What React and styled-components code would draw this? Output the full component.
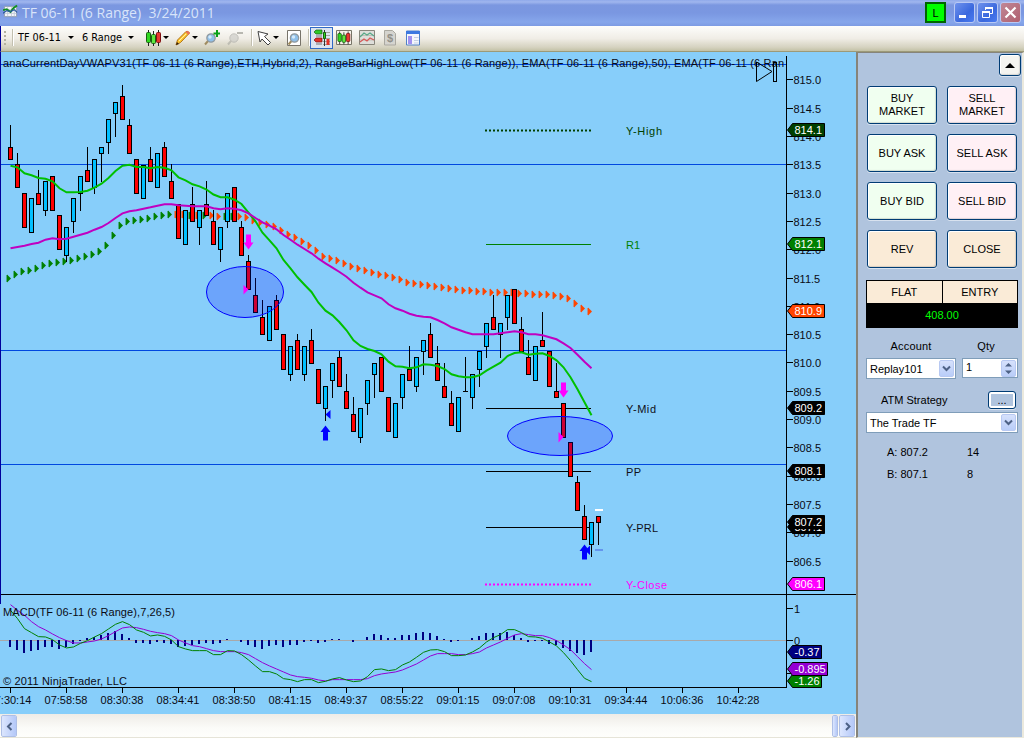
import React from 'react'
import styled, { createGlobalStyle } from 'styled-components'

const GlobalStyle = createGlobalStyle`
* {
  box-sizing: border-box;
}
body {
  margin: 0;
  background: #87cefa;
  font-family: "Liberation Sans", Arial, sans-serif;
  font-size: 11px;
  color: #000;
  overflow: hidden;
}
`

/* ---------- chart data ---------- */

// high, low, body top, body bottom, direction
const candles = [
  [125, 160, 147, 160, 'd'], [153, 188, 164, 188, 'd'], [193, 228, 193, 228, 'd'], [198, 233, 198, 233, 'u'],
  [170, 205, 193, 205, 'd'], [181, 216, 181, 211, 'u'], [176, 211, 176, 211, 'd'], [215, 250, 215, 250, 'd'],
  [227, 262, 227, 256, 'u'], [198, 233, 198, 222, 'u'], [176, 211, 176, 194, 'u'], [147, 182, 170, 182, 'd'],
  [159, 194, 159, 188, 'u'], [147, 182, 147, 154, 'u'], [119, 154, 119, 143, 'u'], [102, 137, 102, 114, 'u'],
  [85, 120, 96, 120, 'd'], [119, 154, 125, 154, 'd'], [159, 194, 159, 194, 'd'], [165, 199, 165, 199, 'u'],
  [147, 182, 159, 182, 'd'], [153, 188, 153, 188, 'u'], [142, 177, 147, 177, 'd'], [164, 199, 181, 199, 'd'],
  [204, 239, 204, 239, 'd'], [210, 245, 210, 245, 'u'], [187, 222, 204, 222, 'd'], [210, 245, 210, 228, 'u'],
  [181, 216, 204, 216, 'd'], [210, 245, 221, 245, 'd'], [227, 262, 227, 250, 'u'], [193, 228, 193, 222, 'u'],
  [187, 222, 187, 222, 'd'], [221, 256, 227, 256, 'd'], [255, 290, 261, 290, 'd'], [278, 313, 295, 313, 'd'],
  [300, 335, 317, 335, 'd'], [306, 341, 306, 341, 'u'], [295, 330, 300, 330, 'd'], [334, 370, 334, 370, 'd'],
  [346, 381, 346, 375, 'u'], [334, 370, 340, 370, 'd'], [346, 381, 346, 375, 'u'], [329, 364, 340, 364, 'd'],
  [369, 404, 369, 404, 'd'], [386, 421, 386, 409, 'u'], [363, 398, 363, 381, 'u'], [351, 387, 357, 387, 'd'],
  [374, 409, 391, 409, 'd'], [397, 432, 414, 432, 'd'], [408, 443, 408, 438, 'u'], [380, 415, 380, 404, 'u'],
  [363, 398, 363, 375, 'u'], [357, 392, 357, 392, 'd'], [397, 432, 397, 432, 'd'], [403, 438, 403, 438, 'u'],
  [374, 409, 374, 398, 'u'], [346, 381, 369, 381, 'd'], [357, 392, 357, 387, 'u'], [340, 375, 340, 352, 'u'],
  [323, 358, 334, 358, 'd'], [346, 381, 363, 381, 'd'], [363, 398, 386, 398, 'd'], [391, 426, 403, 426, 'd'],
  [397, 432, 397, 432, 'u'], [357, 392, 391, 392, 'u'], [374, 409, 374, 398, 'u'], [351, 387, 351, 370, 'u'],
  [323, 358, 323, 347, 'u'], [295, 330, 317, 330, 'd'], [323, 358, 323, 335, 'u'], [295, 330, 295, 318, 'u'],
  [289, 324, 289, 324, 'd'], [317, 352, 329, 352, 'd'], [340, 375, 357, 375, 'd'], [346, 381, 346, 381, 'u'],
  [312, 347, 340, 347, 'd'], [351, 387, 351, 387, 'd'], [363, 398, 391, 398, 'd'], [403, 438, 403, 438, 'd'],
  [442, 477, 442, 477, 'd'], [476, 511, 482, 511, 'd'], [505, 540, 516, 540, 'd'], [522, 557, 522, 545, 'u'],
  [516, 545, 516, 523, 'd'],
]

const emaFast = [
  165.7, 167.3, 173.3, 175.3, 178, 178.7, 181.3, 188.3, 192.3, 192.3, 192, 190.7, 187.7, 183.7, 178, 171, 165.7,
  164.7, 167, 167, 168.3, 167, 167.7, 170.3, 177.3, 180.3, 184.3, 186.4, 189.5, 194.5, 197.3, 197.3, 199.7, 204,
  212.7, 221.3, 232.7, 240.3, 248.3, 260, 268.3, 277.3, 284.7, 292, 302.7, 310.7, 315.3, 322.3, 330.3, 340.3, 346,
  349, 351, 354.3, 361.7, 366.3, 366.7, 368.3, 367.3, 364.3, 364.7, 366, 369, 374.3, 376.3, 377.3, 377.3, 375.3,
  370.7, 366.7, 362.7, 356, 353, 352.3, 354.7, 353.7, 353.3, 356, 360.3, 367.3, 377.3, 389.3, 402.3, 415.3,
]

const emaSlow = [
  248.3, 247, 245.7, 244, 242.7, 239.7, 238.3, 239.3, 238.7, 236.7, 234.7, 232.7, 229.7, 227, 223, 218, 213.3, 211.3,
  210.3, 208.7, 207.3, 205.7, 204.3, 204.3, 205.3, 205.7, 206.3, 206.3, 206.3, 208.3, 209.3, 208.3, 208.7, 210.3,
  213.3, 218, 222.3, 225.7, 229.3, 235, 239.7, 244.7, 249, 253.3, 258.7, 263.3, 267.7, 272, 276.7, 282.7, 287.7,
  292.3, 295.3, 298.3, 304.3, 308.3, 310.7, 313.7, 315.7, 316.7, 317.3, 320, 323.3, 327.3, 329.7, 332.3, 334.3,
  334.3, 334.3, 334.3, 333.3, 332.3, 331.3, 332.3, 334.3, 334.3, 335.3, 337.3, 339.3, 343.3, 348, 354.7, 361.7, 368.3,
]

const vwap = [
  278, 274, 271, 270, 268, 265, 263, 262, 261, 260, 258, 256, 254, 251, 245, 235, 225, 221, 220, 219, 218, 216, 215,
  214, 214, 214, 215, 215, 215, 215, 216, 216, 216, 216, 217, 220, 222, 224, 226, 230, 234, 237, 241, 245, 250, 256,
  258, 260, 263, 266, 268, 270, 272, 274, 275, 277, 279, 282, 283, 284, 285, 286, 287, 288, 289, 290, 290, 291, 291,
  292, 292, 292, 292, 293, 293, 294, 294, 294, 295, 296, 298, 303, 308, 311,
]
const isRising = i => i < 24 || [26, 28, 31, 32].includes(i)

// lower panel series, in thirds of a pixel below the panel's top
const macd = [
  45, 70, 100, 112, 124, 125, 133, 149, 158, 155, 144, 136, 125, 115, 101, 87, 79, 88, 104, 111, 122, 119, 123, 134,
  154, 161, 166, 166, 166, 178, 178, 166, 167, 178, 194, 212, 229, 229, 236, 250, 253, 259, 253, 253, 262, 258, 251,
  247, 254, 259, 257, 244, 223, 221, 226, 223, 209, 200, 186, 171, 164, 163, 169, 181, 181, 179, 170, 158, 140, 127,
  118, 103, 103, 112, 124, 125, 129, 140, 152, 172, 196, 223, 249, 259,
]
const signal = [
  28, 45, 60, 79, 94, 104, 116, 127, 136, 143, 143, 140, 137, 131, 121, 109, 98, 95, 97, 102, 108, 112, 115, 121, 134,
  143, 151, 154, 160, 166, 169, 169, 169, 172, 178, 190, 202, 212, 221, 230, 239, 244, 246, 249, 254, 257, 253, 253,
  253, 253, 253, 250, 241, 236, 233, 230, 224, 215, 206, 194, 182, 175, 175, 175, 178, 178, 175, 170, 158, 149, 140,
  129, 119, 115, 118, 121, 121, 127, 136, 149, 163, 184, 205, 223,
]
// histogram heights in pixels, positive goes down
const histogram = [
  7, 10, 13, 11, 10, 7, 7, 9, 7, 4, 1, -2, -3, -5, -7, -9, -6, -2, 3, 3, 4, 2, 3, 4, 7, 6, 5, 4, 3, 4, 3, -1, 0, 2, 5,
  7, 9, 6, 5, 7, 5, 5, 2, 1, 3, 2, -1, -1, 0, 2, 0, -3, -6, -5, -2, -2, -5, -5, -7, -8, -7, -4, -1, 2, 1, 0, -2, -4,
  -7, -7, -7, -8, -5, -2, 2, 1, 1, 4, 5, 8, 11, 13, 15, 12,
]

const barX = i => 10.5 + 7 * i
const toPoints = (values, y = v => v) => values.map((v, i) => `${barX(i)},${y(v)}`).join(' ')
const lowerY = v => 595.3 + v / 3

const pivots = [
  { label: 'Y-High', y: 130.5, color: '#004000', text: '#004000', dotted: true, width: 36 },
  { label: 'R1', y: 244.5, color: '#008000', text: '#008000', width: 14 },
  { label: 'Y-Mid', y: 408.5, color: '#000', text: '#101018', width: 30 },
  { label: 'PP', y: 471.5, color: '#000', text: '#101018', width: 15 },
  { label: 'Y-PRL', y: 527.5, color: '#000', text: '#101018', width: 32 },
  { label: 'Y-Close', y: 584.5, color: '#ff00ff', text: '#ff00ff', dotted: true, width: 41 },
]

const priceTags = [
  { label: '814.1', y: 130, color: '#004000' },
  { label: '812.1', y: 244, color: '#008000' },
  { label: '810.9', y: 311, color: '#ff4500' },
  { label: '809.2', y: 408, color: '#000' },
  { label: '808.1', y: 471, color: '#000' },
  { label: '807.1', y: 527, color: '#000' },
  { label: '807.2', y: 522, color: '#000' },
  { label: '806.1', y: 584, color: '#ff00ff' },
  { label: '-0.37', y: 652, color: '#000080', width: 34 },
  { label: '-1.26', y: 681, color: '#008000', width: 34 },
  { label: '-0.895', y: 669, color: '#9400d3', width: 40 },
]

const prices = Array.from({ length: 18 }, (_, i) => 815 - i / 2)
const times = [
  '07:30:14', '07:58:58', '08:30:38', '08:34:41', '08:38:50', '08:41:15', '08:49:37',
  '08:55:22', '09:01:15', '09:07:08', '09:10:31', '09:34:44', '10:06:36', '10:42:28',
]

/* ---------- window frame ---------- */

const Window = styled.div`
width: 1024px;
height: 738px;
display: flex;
flex-direction: column;
overflow: hidden;
`

const TitleBar = styled.header`
height: 26px;
flex: none;
display: flex;
align-items: flex-start;
padding: 2px 3px 0 3px;
background: linear-gradient(#8fa9ea 0, #a0b6ee 2px, #7b97e0 5px, #7a97e1 13px, #86a6eb 22px, #7d9be3 26px);
`

const AppIcon = styled.svg`
width: 15px;
height: 15px;
margin-top: 2px;
`

const Title = styled.h1`
margin: 0 auto 0 4px;
font: 500 14px/22px "Open Sans", "Noto Sans", sans-serif;
white-space: pre;
color: #d8e4fa;
`

const LinkBox = styled.span`
width: 21px;
height: 21px;
border: 2px solid #006400;
background: #00ff00;
text-align: center;
line-height: 18px;
margin-right: 8px;
`

const WindowButton = styled.button`
width: 21px;
height: 21px;
padding: 0;
margin-left: ${props => (props.$first ? 0 : 2)}px;
display: block;
border: 1px solid #b9c9f4;
border-radius: 3px;
background: ${props => (props.$close ? 'linear-gradient(135deg, #c08796, #b0606f)' : 'linear-gradient(135deg, #6f92ec, #3a68de 60%, #4a7bf0)')};
`

const ToolBar = styled.nav`
height: 26px;
flex: none;
display: flex;
align-items: center;
padding: 0 0 2px 3px;
border-left: 1px solid #00009c;
border-bottom: 1px solid #9c9a78;
background: linear-gradient(#fdfdfb, #f0ede6 50%, #d5d2c0 85%, #c3c1a6);
`

const ToolText = styled.span`
font: 10.8px "DejaVu Sans Condensed", "DejaVu Sans", sans-serif;
font-stretch: condensed;
width: ${props => props.$width}px;
margin-left: ${props => props.$gap}px;
white-space: nowrap;
`

const Caret = styled.span`
border: 3px solid transparent;
border-top-color: #000;
border-bottom: 0;
margin-left: ${props => props.$gap}px;
`

const Separator = styled.span`
width: 1px;
height: 17px;
background: #c2bfb0;
border-right: 1px solid #fff;
box-sizing: content-box;
margin-left: ${props => props.$gap}px;
`

const ToolIcon = styled.svg`
width: 16px;
height: 16px;
flex: none;
margin-left: ${props => props.$gap}px;
`

const ActiveTool = styled.span`
width: 23px;
height: 22px;
flex: none;
display: flex;
align-items: center;
justify-content: center;
border: 1px solid #316ac5;
background: #dce4f0;
`

const Main = styled.main`
flex: 1;
min-height: 0;
display: flex;
`

const ChartColumn = styled.section`
width: 856px;
display: flex;
flex-direction: column;
background: #87cefa;
`

const Chart = styled.svg`
display: block;
width: 856px;
height: 662px;
flex: none;
font: 11px "Liberation Sans", Arial, sans-serif;
`

const ScrollBar = styled.div`
height: 24px;
display: flex;
align-items: flex-start;
justify-content: space-between;
padding: 1px 1px 0;
border-bottom: 1px solid #e6e4d8;
background: linear-gradient(#efece7, #fbfbf8 60%, #fefefc);
`

const ScrollButton = styled.button`
width: ${props => props.$width || 16}px;
height: 22px;
padding: 0;
display: flex;
align-items: center;
justify-content: center;
border: 1px solid #fff;
outline: 1px solid #aebfe6;
outline-offset: -1px;
border-radius: 2px;
background: linear-gradient(90deg, #dce6fe, #b4c8f8);
`

const ScrollEnd = styled.div`
display: flex;
gap: 1px;
`

/* ---------- order panel ---------- */

const Panel = styled.aside`
width: 168px;
padding: 1px 5px 0 8px;
background: #b0c4de;
border-left: 2px solid #86847a;
border-top: 1px solid #86847a;
border-right: 2px solid #ebe9dd;
border-bottom: 1px solid #ebe9dd;
`

const TopLine = styled.div`
display: flex;
justify-content: flex-end;
margin-right: -4px;
margin-bottom: 10px;
`

const Button = styled.button`
font: 11px/13px "Liberation Sans", Arial, sans-serif;
color: #000;
width: ${props => props.$width || 70}px;
height: ${props => props.$height || 38}px;
padding: 0;
white-space: pre-line;
border: 1px solid #003c74;
border-radius: 3px;
box-shadow: ${props => (props.$focused
    ? 'inset 0 0 0 2px #fff, 0 1px 0 rgba(255, 255, 255, 0.5)'
    : 'inset -1px -1px 1px rgba(120, 120, 120, 0.25), inset 1px 1px 0 #fff, 0 1px 0 rgba(255, 255, 255, 0.5)')};
background: ${props => props.$tone || '#f4f4f0'};
`

const ArrowUp = styled.span`
display: block;
width: 0;
margin: 0 auto;
border: 5px solid transparent;
border-bottom: 5px solid #000;
border-top: 0;
`

const Orders = styled.div`
display: grid;
grid-template-columns: 70px 70px;
gap: 10px;
margin: 0 0 12px 1px;
`

const Position = styled.div`
display: grid;
grid-template-columns: 1fr 1fr;
width: 152px;
gap: 1px;
padding: 1px;
background: #000;
text-align: center;
`

const PositionCell = styled.span`
height: 22px;
line-height: 22px;
background: #faebd7;
`

const PositionValue = styled.span`
grid-column: 1 / 3;
height: 23px;
line-height: 23px;
color: #00ff00;
`

const Labels = styled.div`
display: flex;
height: 30px;
align-items: flex-end;
padding-bottom: 6px;
`

const Label = styled.span`
width: ${props => props.$width}px;
text-align: center;
letter-spacing: 0.15px;
`

const Fields = styled.div`
display: flex;
justify-content: space-between;
width: 152px;
`

const Field = styled.div`
width: ${props => props.$width}px;
height: ${props => props.$height || 21}px;
display: flex;
align-items: center;
justify-content: space-between;
padding: 1px 1px 1px 3px;
border: 1px solid #7f9db9;
background: #fff;
`

const Quantity = styled.span`
padding-bottom: 3px;
`

const DropButton = styled.span`
width: 15px;
height: 17px;
display: flex;
align-items: center;
justify-content: center;
border-radius: 2px;
border: 1px solid #b8c9f2;
background: linear-gradient(#d6e1fc, #b9cdf8);
`

const Strategy = styled.div`
display: flex;
align-items: center;
justify-content: space-between;
height: 18px;
margin-top: 12px;
margin-bottom: 3px;
padding: 0 1px 0 15px;
`

const Quotes = styled.div`
padding-top: 8px;
`

const Quote = styled.div`
display: flex;
height: 22px;
align-items: center;
padding-left: 21px;
`

const QuotePrice = styled.span`
width: 80px;
`

const Chevron = ({ d }) => (
  <svg width="9" height="9" viewBox="0 0 9 9">
    <path d={d} fill="none" stroke="#4d6185" strokeWidth="2" />
  </svg>
)

const Lens = ({ x = 0, y = 0 }) => (
  <g transform={`translate(${x} ${y})`}>
    <path d="M4 9L1 12.5" stroke="#a08c60" strokeWidth="2" />
    <circle cx="7" cy="6" r="4.2" fill="#8fc0ea" stroke="#8f989e" strokeWidth="1.2" />
    <circle cx="6" cy="5" r="1.7" fill="#d4eafa" />
  </g>
)

const TitleIcon = () => (
  <AppIcon viewBox="0 0 16 16">
    <path d="M1.5 2.5h13v11h-13z" fill="#f4f6fa" stroke="#8d9ab0" />
    <path d="M5 3v10M9 3v10M12 3v10M2 6h12M2 10h12" stroke="#c3ccd8" />
    <path d="M0 6.5l4 -1 4 3 3 -4 4 -3" fill="none" stroke="#109020" strokeWidth="2" />
    <path d="M0 10l4 -3 4 1 4 -2 3 3" fill="none" stroke="#2858a0" strokeWidth="1.3" />
  </AppIcon>
)

const Candlesticks = () => (
  <g>
    <path d="M2.5 0v16M7.5 1v15M12.5 0v16" stroke="#222" />
    <rect x=".5" y="2.5" width="4" height="10" rx="1" fill="#30d820" stroke="#186010" />
    <rect x="5.5" y="4.5" width="4" height="9" rx="1" fill="#60e840" stroke="#186010" />
    <rect x="10.5" y="2.5" width="4" height="10" rx="1" fill="#e83830" stroke="#801010" />
  </g>
)

const Tools = () => (
  <ToolBar>
    <svg width="3" height="16" viewBox="0 0 3 16">
      <path d="M1 1v14" stroke="#b4b19f" strokeWidth="2" strokeDasharray="2 2" />
    </svg>
    <Separator $gap={5} />
    <ToolText $gap={4} $width={45}>TF 06-11</ToolText>
    <Caret $gap={5} />
    <ToolText $gap={8} $width={41}>6 Range</ToolText>
    <Caret $gap={5} />
    <ToolIcon $gap={12} viewBox="0 0 16 16"><Candlesticks /></ToolIcon>
    <Caret $gap={1} />
    <ToolIcon $gap={6} viewBox="0 0 16 16">
      <path d="M1 15l1.5 -5L11 1.5q2 -1 3.5 1.5L5.5 12.5z" fill="#ffc832" stroke="#b07010" />
      <path d="M1 15l1 -3 2 2z" fill="#302010" />
      <path d="M10.5 2l3 3 1.5 -2q-1 -2 -3 -2z" fill="#e87058" />
      <path d="M4 11l7 -7" stroke="#fff0a0" />
    </ToolIcon>
    <Caret $gap={1} />
    <ToolIcon $gap={6} viewBox="0 0 16 16">
      <Lens y={2} />
      <path d="M13 0v7M9.5 3.5h7" stroke="#08a018" strokeWidth="2" />
    </ToolIcon>
    <ToolIcon $gap={7} viewBox="0 0 16 16" opacity="0.6">
      <g transform="translate(0 2)">
        <path d="M4 9L1 12.5" stroke="#a8a8a0" strokeWidth="2" />
        <circle cx="7" cy="6" r="4.2" fill="#c8c8c4" stroke="#a4a4a0" />
      </g>
      <path d="M10 3h6" stroke="#909088" strokeWidth="2" />
    </ToolIcon>
    <Separator $gap={8} />
    <ToolIcon $gap={4} viewBox="0 0 16 16">
      <path d="M1 1.5l10 2.5 -3.5 2.500 6 6 -2.500 2.500 -6 -6 -2 3z" fill="#fff" stroke="#404040" />
    </ToolIcon>
    <Caret $gap={0} />
    <ToolIcon $gap={7} viewBox="0 0 16 16">
      <path d="M1.5.5h13v15h-13z" fill="#fff" stroke="#77736a" />
      <Lens x={1.5} y={2} />
    </ToolIcon>
    <Separator $gap={6} />
    <ActiveTool>
      <svg width="18" height="18" viewBox="0 0 18 18">
        <path d="M1 3l2 -2h6v4h-6z" fill="#30c828" stroke="#186010" strokeWidth=".7" />
        <path d="M10 3.5h7M10 6.5h7M10 9.5h7M10 12.5h7M10 15.5h7" stroke="#a0a49c" />
        <path d="M11.5 1v16" stroke="#333" />
        <path d="M1 11l2 -2h6v4h-6z" fill="#e03028" stroke="#801010" strokeWidth=".7" />
        <path d="M3 7h6M3 15h6" stroke="#777" />
        <path d="M10.5 3.500h2v6h-2z" fill="#30d820" stroke="#186010" />
        <path d="M15 10v6" stroke="#e03028" strokeWidth="3" />
      </svg>
    </ActiveTool>
    <ToolIcon $gap={3} viewBox="0 0 16 16">
      <path d="M.5.5h15v14h-15z" fill="#f5f3ea" stroke="#777468" />
      <g transform="translate(1.5 1.5) scale(.85 .8)"><Candlesticks /></g>
    </ToolIcon>
    <ToolIcon $gap={7} viewBox="0 0 16 16">
      <path d="M.5.5h15v14h-15z" fill="#dededa" stroke="#88867c" />
      <path d="M1 5.5h14M1 10h14" stroke="#bfbfb8" />
      <path d="M1 7l4 -4 3 2 3 -2 4 3" fill="none" stroke="#58a888" strokeWidth="1.2" />
      <path d="M1 12l4 -3 3 2 3 -3 4 2" fill="none" stroke="#d85858" strokeWidth="1.2" />
    </ToolIcon>
    <ToolIcon $gap={7} viewBox="0 0 16 16">
      <path d="M2.5.5h8l3 3v11.500h-11z" fill="#d5d4cf" stroke="#aaa8a0" />
      <text x="8" y="12" fontSize="11" fontWeight="bold" textAnchor="middle" fill="#929088">$</text>
    </ToolIcon>
    <ToolIcon $gap={7} viewBox="0 0 16 16">
      <path d="M1.5 1h13v14h-13z" fill="#f4f6fc" stroke="#5080c8" />
      <path d="M1 1h14v3h-14z" fill="#3c78e0" />
      <path d="M3 6h4v8h-4z" fill="#a090f0" />
      <path d="M9 7.5h4.500M9 10.500h4.500M9 13h4.500" stroke="#c4d0e4" />
    </ToolIcon>
  </ToolBar>
)

const PriceTag = ({ label, y, color, width = 37 }) => (
  <g>
    <path
      d={`M787.5 ${y}l5 -6.5h${width - 5}v13h-${width - 5}z`}
      fill={color}
      stroke="#000"
    />
    <text x="794.5" y={y + 4} fill="#fff">{label}</text>
  </g>
)

const PriceChart = () => (
  <Chart viewBox="0 52 856 662">
    <defs>
      <clipPath id="plot"><rect x="0" y="52" width="785" height="642" /></clipPath>
    </defs>

    <g stroke="#0048e0" shapeRendering="crispEdges">
      <path d="M0 64.5H786M0 164.5H786M0 350.5H786M0 464.5H786" />
    </g>

    <g>
      {vwap.map((y, i) => (
        <g key={i} fill={isRising(i) ? '#008000' : '#ff4500'}>
          <rect x={barX(i) - 4.5} y={y - 3} width="2" height="7" opacity="0.45" />
          <path d={`M${barX(i) - 3.5} ${y - 3.5}l4 4 -4 4z`} />
        </g>
      ))}
    </g>

    {pivots.map(({ label, y, color, text, dotted, width }) => (
      <g key={label}>
        <path
          d={dotted ? `M485 ${y}H591` : `M485.5 ${y}H591`}
          stroke={color}
          strokeWidth={dotted ? 2 : 1}
          strokeDasharray={dotted ? '2 2' : undefined}
          shapeRendering={dotted ? undefined : 'crispEdges'}
        />
        <text x="626" y={y + 4.5} fill={text} textLength={width}>{label}</text>
      </g>
    ))}

    <g stroke="#000" shapeRendering="crispEdges">
      {candles.map(([high, low, top, bottom, side], i) => (
        <g key={i}>
          <path d={`M${barX(i)} ${high}V${low}`} />
          {bottom - top > 1
            ? <rect x={barX(i) - 2} y={top + 0.5} width="4" height={bottom - top - 1} fill={side === 'u' ? '#00bfff' : '#ff0000'} />
            : <path d={`M${barX(i) - 2.5} ${top + 0.5}h5`} />}
        </g>
      ))}
    </g>

    <polyline points={toPoints(emaFast)} fill="none" stroke="#00c000" strokeWidth="2" />
    <polyline points={toPoints(emaSlow)} fill="none" stroke="#c000c0" strokeWidth="2" />

    <g fill="#0000ff" fillOpacity="0.2" stroke="#0000ff">
      <ellipse cx="245" cy="292" rx="38.5" ry="25.5" />
      <ellipse cx="560" cy="436" rx="52.5" ry="19.5" />
    </g>

    <g fill="#ff00ff">
      <path d="M246 234.500h5v8h2.500l-5 7 -5 -7h2.500z" />
      <path d="M561 382.500h5v8h2.500l-5 7 -5 -7h2.500z" />
      <path d="M243.500 285l5 4.500 -5 5z" />
      <path d="M558.500 432l5 5 -5 5.500z" />
    </g>
    <g fill="#0000ff">
      <path d="M323 440.500h5v-8.500h2.500l-5 -6.500 -5 6.500h2.500z" />
      <path d="M582 559.500h5v-8.500h2.500l-5 -6.500 -5 6.500h2.500z" />
      <path d="M330.500 410v9l-5 -4.500z" />
      <path d="M590 545.500v9.500l-5 -4.500z" />
    </g>
    <path d="M595 510h8" stroke="#fff" strokeWidth="2" />
    <path d="M595 550h8" stroke="#6495ed" strokeWidth="2" />

    <path d="M0 640.5H786" stroke="#a9a9a9" shapeRendering="crispEdges" />
    {histogram.map((h, i) => (
      <rect key={i} x={barX(i) - 1.5} y={h > 0 ? 640 : 640 + h} width="2" height={Math.abs(h)} fill="#000080" />
    ))}
    <polyline points={toPoints(signal, lowerY)} fill="none" stroke="#9400d3" />
    <polyline points={toPoints(macd, lowerY)} fill="none" stroke="#008000" />

    <g clipPath="url(#plot)" fill="#0a0a14">
      <text x="3" y="67" textLength="781">
        anaCurrentDayVWAPV31(TF 06-11 (6 Range),ETH,Hybrid,2), RangeBarHighLow(TF 06-11 (6 Range)), EMA(TF 06-11 (6 Range),50), EMA(TF 06-11 (6 Ran
      </text>
      <text x="3" y="616" textLength="172">MACD(TF 06-11 (6 Range),7,26,5)</text>
      <text x="3" y="685" textLength="124">© 2011 NinjaTrader, LLC</text>
    </g>
    <path d="M756.5 62v19.500l15.500 -10z" fill="none" stroke="#000" />
    <rect x="773.5" y="62.5" width="3" height="19" fill="none" stroke="#000" />

    <g stroke="#000" shapeRendering="crispEdges">
      <path d="M786.5 56V687M0 594.5H856M0 687.5H787M787 608.5h6M787 640.5h6M787 673.5h6" />
      {prices.map((price, i) => <path key={price} d={`M787 ${Math.round(79.2 + i * 28.33) + 0.5}h6`} />)}
      {times.map((time, i) => <path key={time} d={`M${10.5 + i * 56} 688v5`} />)}
    </g>
    <g fill="#0a0a14">
      {prices.map((price, i) => (
        <text key={price} x="793.500" y={Math.round(79.2 + i * 28.33) + 5}>{price.toFixed(1)}</text>
      ))}
      <text x="794" y="613">1</text>
      <text x="794" y="645">0</text>
      {times.map((time, i) => (
        <text key={time} x={10 + i * 56} y="704" textAnchor="middle">{time}</text>
      ))}
    </g>
    {priceTags.map(tag => <PriceTag key={tag.label} {...tag} />)}
    <path d="M.5 52V604" stroke="#00009c" />
  </Chart>
)

const OrderPanel = () => (
  <Panel>
    <TopLine>
      <Button $width={22} $height={22}><ArrowUp /></Button>
    </TopLine>
    <Orders>
      <Button $tone="#f0fff0">{'BUY\nMARKET'}</Button>
      <Button $tone="#fff0f5">{'SELL\nMARKET'}</Button>
      <Button $tone="#f0fff0">BUY ASK</Button>
      <Button $tone="#fff0f5">SELL ASK</Button>
      <Button $tone="#f0fff0">BUY BID</Button>
      <Button $tone="#fff0f5">SELL BID</Button>
      <Button $tone="#faebd7">REV</Button>
      <Button $tone="#faebd7">CLOSE</Button>
    </Orders>
    <Position>
      <PositionCell>FLAT</PositionCell>
      <PositionCell>ENTRY</PositionCell>
      <PositionValue>408.00</PositionValue>
    </Position>
    <Labels>
      <Label $width={90}>Account</Label>
      <Label $width={60}>Qty</Label>
    </Labels>
    <Fields>
      <Field $width={90}>
        Replay101
        <DropButton><Chevron d="M1 2.5l3.5 3.5 3.5 -3.5" /></DropButton>
      </Field>
      <Field $width={56} $height={20}>
        <Quantity>1</Quantity>
        <DropButton>
          <svg width="7" height="13" viewBox="0 0 7 13">
            <path d="M0 4.500l3.500 -3.500 3.500 3.500zM0 8.500l3.500 3.500 3.500 -3.500z" fill="#4d6185" />
          </svg>
        </DropButton>
      </Field>
    </Fields>
    <Strategy>
      ATM Strategy
      <Button $width={28} $height={18} $tone="#b0c4de" $focused>...</Button>
    </Strategy>
    <Field $width={152}>
      The Trade TF
      <DropButton><Chevron d="M1 2.5l3.5 3.5 3.5 -3.5" /></DropButton>
    </Field>
    <Quotes>
      <Quote><QuotePrice>A: 807.2</QuotePrice>14</Quote>
      <Quote><QuotePrice>B: 807.1</QuotePrice>8</Quote>
    </Quotes>
  </Panel>
)

const App = () => {
  return (
    <Window>
      <GlobalStyle />
      <TitleBar>
        <TitleIcon />
        <Title>TF 06-11 (6 Range)  3/24/2011</Title>
        <LinkBox>L</LinkBox>
        <WindowButton $first>
          <svg width="19" height="19" viewBox="0 0 19 19"><path d="M4 13.5h7" stroke="#fff" strokeWidth="3" /></svg>
        </WindowButton>
        <WindowButton>
          <svg width="19" height="19" viewBox="0 0 19 19">
            <path d="M7.5 7V4.500h7v6H12M4.500 8.500h7v6h-7z" fill="none" stroke="#fff" />
            <path d="M7 5h8M4 9h8" stroke="#fff" strokeWidth="2" />
          </svg>
        </WindowButton>
        <WindowButton $close>
          <svg width="19" height="19" viewBox="0 0 19 19"><path d="M4.5 4.500l10 10M14.500 4.500l-10 10" stroke="#fff" strokeWidth="2.2" /></svg>
        </WindowButton>
      </TitleBar>
      <Tools />
      <Main>
        <ChartColumn>
          <PriceChart />
          <ScrollBar>
            <ScrollButton><Chevron d="M6.5 1L3 4.500l3.500 3.500" /></ScrollButton>
            <ScrollEnd>
              <ScrollButton $width={6} />
              <ScrollButton><Chevron d="M3 1l3.5 3.500L3 8" /></ScrollButton>
            </ScrollEnd>
          </ScrollBar>
        </ChartColumn>
        <OrderPanel />
      </Main>
    </Window>
  )
}

export default App
